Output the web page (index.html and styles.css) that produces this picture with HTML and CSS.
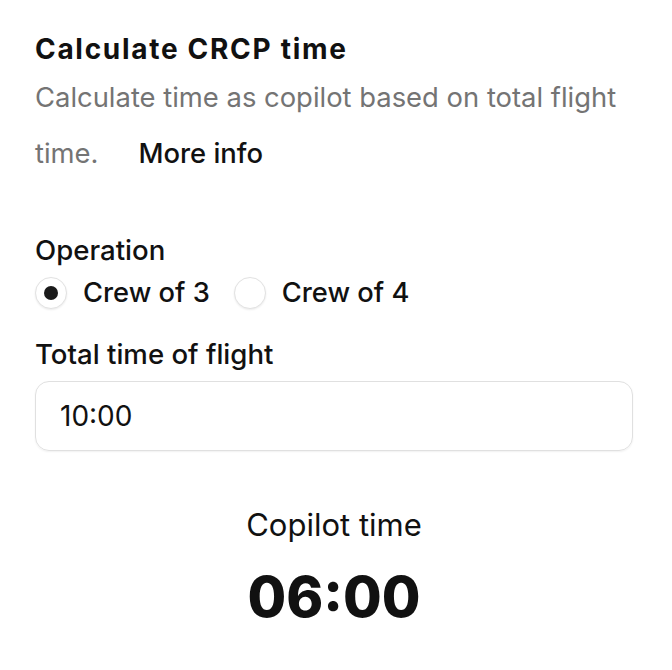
FILE: index.html
```html
<!DOCTYPE html>
<html>
<head>
<meta charset="utf-8">
<link rel="stylesheet" href="styles.css">
</head>
<body>
<main class="card">
  <h1 class="title">Calculate CRCP time</h1>
  <div class="desc">
    <p class="desc-line">Calculate time as copilot based on total flight</p>
    <p class="desc-line desc-row"><span>time.</span><a class="more">More info</a></p>
  </div>

  <section class="field op">
    <div class="label">Operation</div>
    <div class="radios">
      <label class="radio"><span class="dot checked"></span>Crew of 3</label>
      <label class="radio"><span class="dot"></span>Crew of 4</label>
    </div>
  </section>

  <section class="field total">
    <div class="label">Total time of flight</div>
    <div class="input">10:00</div>
  </section>

  <section class="result">
    <div class="result-label">Copilot time</div>
    <div class="result-value">06:00</div>
  </section>
</main>
</body>
</html>
```

FILE: styles.css
```css
* { box-sizing: border-box; }
html, body { margin: 0; background: #fff; }
body {
  font-family: Inter, "Noto Sans", sans-serif;
  color: #111;
  padding: 0 39px 0 35px;
}
.card { display: flex; flex-direction: column; }
.title {
  margin: 30px 0 0;
  font-size: 28px;
  font-weight: 700;
  line-height: 38px;
  letter-spacing: 1.7px;
}
.desc {
  margin: 1px 0 0;
  font-size: 27.4px;
  line-height: 56px;
  color: #747474;
}
.desc-line { margin: 0; white-space: nowrap; }
.desc-row { display: flex; gap: 40px; }
.more {
  font-weight: 500;
  color: #111;
  cursor: pointer;
}
.field { display: flex; flex-direction: column; }
.op { margin-top: 51px; }
.label { font-size: 27.6px; line-height: 36px; font-weight: 500; }
.radios { display: flex; gap: 24px; margin-top: 7px; }
.radio { display: flex; align-items: center; gap: 16px; font-size: 27.3px; line-height: 36px; font-weight: 500; }
.dot {
  width: 32px; height: 32px; border-radius: 50%;
  border: 1px solid #e2e2e2; background: #fff;
  box-shadow: 0 1px 2px rgba(0,0,0,0.08);
  display: flex; align-items: center; justify-content: center;
}
.dot.checked::after { content: ""; width: 14px; height: 14px; border-radius: 50%; background: #1a1a1a; }
.total { margin-top: 25px; }
.input {
  margin-top: 9px;
  height: 70px;
  border: 1px solid #e0e0e0;
  border-radius: 14px;
  padding: 0 24px;
  display: flex; align-items: center;
  font-size: 28px;
  box-shadow: 0 1px 2px rgba(0,0,0,0.06);
}
.result { display: flex; flex-direction: column; align-items: center; margin-top: 54px; }
.result-label { font-size: 31px; line-height: 40px; }
.result-value { font-size: 56px; font-weight: 800; line-height: 72px; margin-top: 16px; }
```
